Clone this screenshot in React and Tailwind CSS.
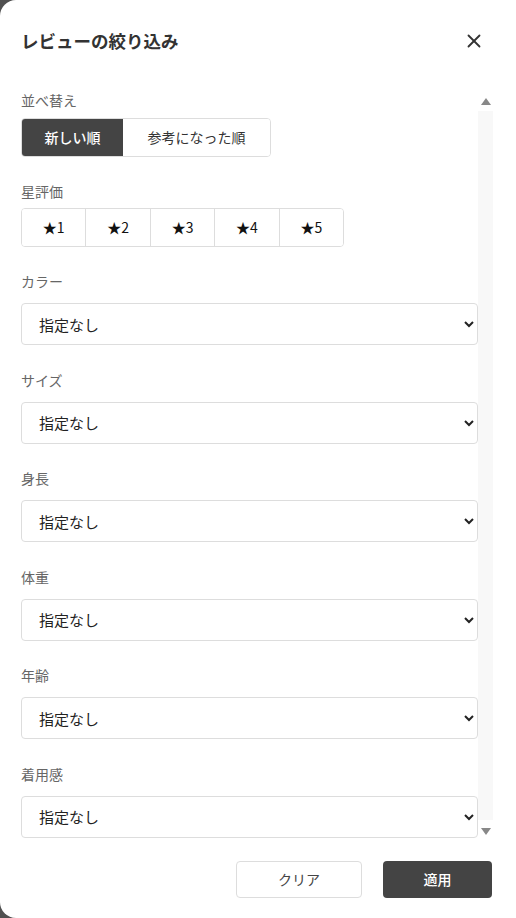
import { X } from 'lucide-react';

const fields = ['カラー', 'サイズ', '身長', '体重', '年齢', '着用感'];
const stars = [1, 2, 3, 4, 5];

export default function App() {
  return (
    <div
      className="h-[918px] w-[516px] overflow-hidden bg-[#505050] text-[#333]"
      style={{ fontFamily: '"Noto Sans CJK JP", "Noto Sans", sans-serif' }}
    >
      <div className="flex h-[918px] flex-col rounded-l-2xl bg-white">
        {/* Header */}
        <header className="flex h-[82px] shrink-0 items-center justify-between pl-[21px] pr-[31px]">
          <h2 className="text-[17.5px] font-bold text-[#333]">レビューの絞り込み</h2>
          <button className="text-[#333]">
            <X size={22} strokeWidth={2} />
          </button>
        </header>

        {/* Body with scrollbar */}
        <div className="ml-[21px] mr-[23px] flex h-[758px] shrink-0">
          <div className="w-[457px] overflow-hidden pt-[8px]">
            <section>
              <p className="text-[14px] leading-[20px] text-[#666]">並べ替え</p>
              <div className="mt-[8px] flex h-[39px] w-[250px] overflow-hidden rounded-[4px] border border-[#ddd] text-[14px]">
                <button className="w-[101px] bg-[#444] font-medium text-white">新しい順</button>
                <button className="flex-1 bg-white text-[#333]">参考になった順</button>
              </div>
            </section>

            <section className="mt-[24px]">
              <p className="text-[14px] leading-[20px] text-[#666]">星評価</p>
              <div className="mt-[7px] flex h-[39px] w-[323px] overflow-hidden rounded-[4px] border border-[#ddd] text-[14px]">
                {stars.map((n, i) => (
                  <button
                    key={n}
                    className={`flex-1 bg-white text-[#111] ${i > 0 ? 'border-l border-[#ddd]' : ''}`}
                  >
                    ★{n}
                  </button>
                ))}
              </div>
            </section>

            {fields.map((label, i) => (
              <section key={label} className={i === 0 ? 'mt-[24px]' : 'mt-[24.6px]'}>
                <p className="text-[14px] leading-[20px] text-[#666]">{label}</p>
                <select className="mt-[12px] h-[42px] w-full rounded-[4px] border border-[#ddd] bg-white pl-[13px] pr-[8px] text-[15px] text-[#222]">
                  <option>指定なし</option>
                </select>
              </section>
            ))}
          </div>

          {/* scrollbar */}
          <div className="flex w-[15px] flex-col items-center">
            <div className="mt-[16px] h-0 w-0 border-x-[5px] border-b-[7px] border-x-transparent border-b-[#888]" />
            <div className="mt-[6px] w-full flex-1 bg-[#f8f8f8]" />
            <div className="mb-[5px] mt-[8px] h-0 w-0 border-x-[5px] border-t-[7px] border-x-transparent border-t-[#888]" />
          </div>
        </div>

        {/* Footer */}
        <footer className="flex justify-end gap-[21px] pr-[24px] pt-[21px]">
          <button className="h-[37px] w-[126px] rounded-[4px] border border-[#ddd] bg-white text-[14px] text-[#444]">
            クリア
          </button>
          <button className="h-[37px] w-[109px] rounded-[4px] bg-[#444] text-[14px] font-medium text-white">
            適用
          </button>
        </footer>
      </div>
    </div>
  );
}
